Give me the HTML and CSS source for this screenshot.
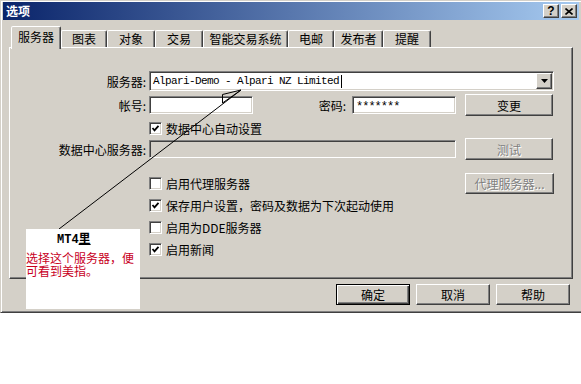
FILE: index.html
```html
<!DOCTYPE html>
<html lang="zh">
<head>
    <meta charset="UTF-8">
    <meta name="viewport" content="width=device-width, initial-scale=1.0">
    <title>选项</title>
    <link rel="stylesheet" href="styles.css">
</head>
<body>
    <div class="dialog">
        <div class="titlebar">
            <span class="title">选项</span>
            <div class="title-buttons">
                <span class="tbtn">?</span>
                <span class="tbtn">
                    <svg width="8" height="7" viewBox="0 0 8 7"><path d="M0.5 0.5 L7.5 6.5 M7.5 0.5 L0.5 6.5" stroke="#000" stroke-width="1.6"/></svg>
                </span>
            </div>
        </div>

        <div class="tabs">
            <div class="tab active" style="width:50px">服务器</div>
            <div class="tab" style="width:46px">图表</div>
            <div class="tab" style="width:48px">对象</div>
            <div class="tab" style="width:48px">交易</div>
            <div class="tab" style="width:85px">智能交易系统</div>
            <div class="tab" style="width:46px">电邮</div>
            <div class="tab" style="width:49px">发布者</div>
            <div class="tab" style="width:48px">提醒</div>
        </div>

        <div class="panel">
            <div class="row r-server">
                <span class="lbl">服务器:</span>
                <div class="combo sunken">
                    <span class="combo-text">Alpari-Demo - Alpari NZ Limited</span><span class="caret"></span>
                    <span class="drop raised">
                        <svg width="7" height="4" viewBox="0 0 7 4"><path d="M0 0 H7 L3.5 4 Z" fill="#000"/></svg>
                    </span>
                </div>
            </div>

            <div class="row r-login">
                <span class="lbl">帐号:</span>
                <div class="input sunken short"></div>
                <span class="lbl pass-lbl">密码:</span>
                <div class="input sunken short"><span class="stars">*******</span></div>
                <button class="btn raised">变更</button>
            </div>

            <div class="row r-auto">
                <label class="check"><span class="box sunken"><svg width="9" height="9" viewBox="0 0 9 9"><path d="M1.5 4 L3.5 6.3 L7.5 1.8" stroke="#000" stroke-width="1.8" fill="none"/></svg></span>数据中心自动设置</label>
            </div>

            <div class="row r-dc">
                <span class="lbl">数据中心服务器:</span>
                <div class="input sunken disabled wide"></div>
                <button class="btn raised off">测试</button>
            </div>

            <div class="row r-proxy">
                <label class="check"><span class="box sunken"></span>启用代理服务器</label>
                <button class="btn raised off proxy-btn">代理服务器...</button>
            </div>

            <div class="row">
                <label class="check"><span class="box sunken"><svg width="9" height="9" viewBox="0 0 9 9"><path d="M1.5 4 L3.5 6.3 L7.5 1.8" stroke="#000" stroke-width="1.8" fill="none"/></svg></span>保存用户设置，密码及数据为下次起动使用</label>
            </div>

            <div class="row">
                <label class="check"><span class="box sunken"></span>启用为DDE服务器</label>
            </div>

            <div class="row">
                <label class="check"><span class="box sunken"><svg width="9" height="9" viewBox="0 0 9 9"><path d="M1.5 4 L3.5 6.3 L7.5 1.8" stroke="#000" stroke-width="1.8" fill="none"/></svg></span>启用新闻</label>
            </div>
        </div>

        <div class="footer">
            <button class="btn raised default">确定</button>
            <button class="btn raised">取消</button>
            <button class="btn raised">帮助</button>
        </div>

        <!-- annotation pasted over the dialog -->
        <svg class="pointer" width="581" height="313" viewBox="0 0 581 313">
            <path d="M58 228 L240 89" stroke="#000" stroke-width="1" fill="none"/>
            <polygon points="240,89 221.5,93.5 221.5,102" stroke="#000" stroke-width="1" fill="none"/>
        </svg>
        <div class="note">
            <div class="note-title">MT4<span class="u">里</span></div>
            <div class="note-body">
                <div class="note-text">选择这个服务器，便</div>
                <div class="note-text">可看到美指。</div>
            </div>
        </div>
    </div>
</body>
</html>
```

FILE: styles.css
```css
html, body {
    overflow: hidden;
}
body {
    margin: 0;
    background: #fff;
    font-family: "Noto Sans CJK SC", "Liberation Sans", sans-serif;
    font-size: 12px;
    color: #000;
}
.dialog {
    position: relative;
    width: 581px;
    height: 313px;
    box-sizing: border-box;
    background: #d4d0c8;
    border: 1px solid;
    border-right: none;
    border-color: #d4d0c8 #404040 #404040 #d4d0c8;
    box-shadow: inset 1px 1px #fff, inset 0 -1px #808080;
    padding: 1px 2px 0 2px;
}
.raised {
    border: 1px solid;
    border-color: #fff #404040 #404040 #fff;
    box-shadow: inset -1px -1px #808080;
    background: #d4d0c8;
}
.sunken {
    border: 1px solid;
    border-color: #808080 #fff #fff #808080;
    box-shadow: inset 1px 1px #404040, inset -1px -1px #d4d0c8;
    background: #fff;
}

/* title bar */
.titlebar {
    height: 18px;
    display: flex;
    align-items: center;
    justify-content: space-between;
    padding: 0 2px 0 3px;
    background: linear-gradient(to right, #0a246a, #a6caf0);
}
.title {
    color: #fff;
    font-weight: bold;
    line-height: 18px;
}
.title-buttons {
    display: flex;
    gap: 2px;
}
.tbtn {
    width: 16px;
    height: 14px;
    box-sizing: border-box;
    display: flex;
    align-items: center;
    justify-content: center;
    font-family: "Liberation Sans", sans-serif;
    font-weight: bold;
    font-size: 12px;
    line-height: 12px;
    border: 1px solid;
    border-color: #fff #404040 #404040 #fff;
    box-shadow: inset -1px -1px #808080;
    background: #d4d0c8;
}

/* tabs */
.tabs {
    display: flex;
    align-items: flex-end;
    height: 21px;
    margin-top: 6px;
    padding-left: 8px;
    position: relative;
    z-index: 1;
}
.tab {
    height: 17px;
    box-sizing: border-box;
    display: flex;
    align-items: center;
    justify-content: center;
    border: 1px solid;
    border-bottom: none;
    border-color: #fff #404040 transparent #fff;
    box-shadow: inset -1px 0 #808080;
    border-radius: 2px 2px 0 0;
    line-height: 14px;
}
.tab.active {
    height: 23px;
    margin-bottom: -2px;
    padding-bottom: 3px;
    background: #d4d0c8;
}

/* panel */
.panel {
    margin: 0 6px;
    height: 232px;
    box-sizing: border-box;
    border: 1px solid;
    border-color: #fff #404040 #404040 #fff;
    box-shadow: inset -1px -1px #808080;
    padding-top: 23px;
    padding-right: 18px;
}
.row {
    display: flex;
    align-items: center;
    height: 22px;
}
.r-server {
    height: 20px;
}
.r-login {
    margin-top: 3px;
}
.r-auto {
    height: 20px;
    margin-top: 2px;
}
.r-proxy {
    margin-top: 12px;
}
.lbl {
    width: 139px;
    flex: none;
    text-align: right;
    padding-right: 3px;
    box-sizing: border-box;
}
.pass-lbl {
    width: 99px;
    padding-right: 6px;
}
.combo {
    flex: 1;
    height: 20px;
    box-sizing: border-box;
    display: flex;
    align-items: center;
    padding-left: 3px;
}
.combo-text {
    font-family: "Liberation Mono", monospace;
    font-size: 11px;
    letter-spacing: -0.6px;
}
.caret {
    width: 1px;
    height: 13px;
    background: #000;
    margin-left: 2px;
}
.drop {
    margin-left: auto;
    margin-right: 1px;
    width: 16px;
    height: 16px;
    box-sizing: border-box;
    display: flex;
    align-items: center;
    justify-content: center;
}
.input {
    height: 18px;
    box-sizing: border-box;
    display: flex;
    align-items: center;
    padding-left: 3px;
}
.input.short {
    width: 104px;
}
.input.wide {
    width: 307px;
}
.input.disabled {
    background: #d4d0c8;
}
.stars {
    font-family: "Liberation Mono", monospace;
    font-size: 12px;
    letter-spacing: -1px;
    padding-top: 3px;
}
.btn {
    height: 22px;
    width: 88px;
    margin-left: 9px;
    font-family: inherit;
    font-size: 12px;
    padding: 0;
    color: #000;
}
.btn.off {
    color: #808080;
    text-shadow: 1px 1px #fff;
}
.proxy-btn {
    margin-left: auto;
    width: 89px;
    height: 21px;
}
.check {
    display: flex;
    align-items: center;
    margin-left: 139px;
    gap: 4px;
}
.box {
    width: 13px;
    height: 13px;
    box-sizing: border-box;
    display: flex;
    align-items: center;
    justify-content: center;
}

/* dialog buttons */
.footer {
    display: flex;
    justify-content: flex-end;
    gap: 6px;
    margin-top: 5px;
    padding-right: 9px;
}
.footer .btn {
    width: 74px;
    height: 21px;
    margin-left: 0;
}
.footer .btn.default {
    border-color: #000;
    box-shadow: inset 1px 1px #fff, inset -1px -1px #404040, inset -2px -2px #808080;
}

/* annotation */
.pointer {
    position: absolute;
    left: 0;
    top: 0;
    pointer-events: none;
}
.note {
    position: absolute;
    left: 25px;
    top: 228px;
    width: 114px;
    height: 80px;
    background: #fff;
}
.note-title {
    padding: 3px 0 0 31px;
    font-weight: bold;
    line-height: 12px;
    font-family: "Liberation Mono", "Noto Sans CJK SC", monospace;
}
.u {
    font-family: "Noto Sans CJK SC", sans-serif;
    text-decoration: underline;
}
.note-body {
    margin-top: 5px;
}
.note-text {
    line-height: 13px;
    color: #c8001e;
}
```
